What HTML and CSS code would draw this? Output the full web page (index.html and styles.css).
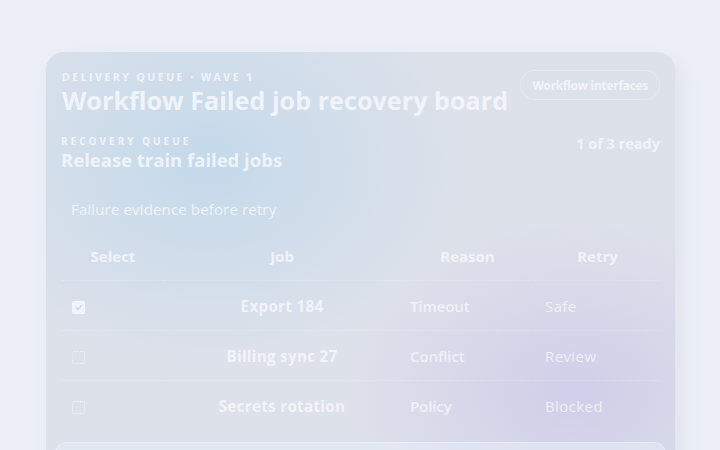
FILE: index.html
```html
<!DOCTYPE html>
<html>
<head>
<meta charset="utf-8">
<link rel="stylesheet" href="styles.css">
</head>
<body>
<main class="card">
  <header class="top">
    <div class="titles">
      <div class="eyebrow">Delivery queue · Wave 1</div>
      <h1 class="title">Workflow Failed job recovery board</h1>
    </div>
    <span class="pill">Workflow interfaces</span>
  </header>
  <section class="queue">
    <div class="queue-head">
      <div>
        <div class="eyebrow small">Recovery queue</div>
        <h2 class="subtitle">Release train failed jobs</h2>
      </div>
      <div class="ready">1 of 3 ready</div>
    </div>
    <p class="caption">Failure evidence before retry</p>
    <table class="jobs">
      <colgroup>
        <col class="c-sel"><col class="c-job"><col class="c-reason"><col class="c-retry">
      </colgroup>
      <thead>
        <tr><th>Select</th><th>Job</th><th>Reason</th><th>Retry</th></tr>
      </thead>
      <tbody>
        <tr>
          <td><span class="box checked"><svg viewBox="0 0 12 12" width="10" height="10"><path d="M2.5 6.2 L5 8.6 L9.6 3.4" fill="none" stroke="#c9d5e4" stroke-width="1.6"/></svg></span></td>
          <td class="job">Export 184</td><td class="reason">Timeout</td><td class="retry">Safe</td>
        </tr>
        <tr>
          <td><span class="box"></span></td>
          <td class="job">Billing sync 27</td><td class="reason">Conflict</td><td class="retry">Review</td>
        </tr>
        <tr>
          <td><span class="box"></span></td>
          <td class="job">Secrets rotation</td><td class="reason">Policy</td><td class="retry">Blocked</td>
        </tr>
      </tbody>
    </table>
  </section>
  <footer class="foot"></footer>
</main>
</body>
</html>
```
FILE: styles.css
```css
html, body { margin: 0; padding: 0; }
body {
  background: #eceff7;
  font-family: "Open Sans", "Noto Sans", sans-serif;
  color: rgba(244, 246, 251, 0.92);
  height: 450px;
  overflow: hidden;
}
.card {
  margin: 52px 45px 0 46px;
  height: 440px;
  border-radius: 18px;
  background:
    radial-gradient(ellipse 260px 200px at 160px 110px, rgba(195, 217, 235, 0.95), rgba(195, 217, 235, 0) 100%),
    radial-gradient(ellipse 230px 170px at 530px 340px, rgba(208, 205, 233, 0.95), rgba(208, 205, 233, 0) 100%),
    #dde1ea;
  box-shadow: 6px 8px 18px rgba(200, 206, 222, 0.35);
  padding: 18px 15px 0 16px;
  box-sizing: border-box;
}
.top {
  display: flex;
  justify-content: space-between;
  align-items: flex-start;
}
.eyebrow {
  font-size: 10.5px;
  font-weight: 700;
  letter-spacing: 2.5px;
  text-transform: uppercase;
  line-height: 14px;
}
.eyebrow.small { font-size: 10px; letter-spacing: 3px; margin-left: -1px; }
.title {
  margin: 0;
  font-size: 25.2px;
  font-weight: 700;
  line-height: 33px;
  letter-spacing: 0;
}
.pill {
  border: 1px dotted rgba(244, 246, 251, 0.8);
  border-radius: 16px;
  padding: 6px 11px;
  font-size: 11.8px;
  font-weight: 700;
  letter-spacing: -0.2px;
  line-height: 16px;
}
.queue { padding-top: 17px; }
.queue-head {
  display: flex;
  justify-content: space-between;
  align-items: flex-start;
}
.subtitle {
  margin: 0 0 0 -1px;
  font-size: 18.5px;
  font-weight: 700;
  line-height: 24px;
  letter-spacing: 0;
}
.ready {
  font-size: 14.5px;
  font-weight: 700;
  margin-top: 0;
  letter-spacing: 0;
}
.caption {
  margin: 28px 0 0 9px;
  font-size: 15px;
  line-height: 18px;
  letter-spacing: 0.15px;
}
.jobs {
  margin-top: 14px;
  border-collapse: collapse;
  width: 598px;
  table-layout: fixed;
}
.c-sel { width: 102px; }
.c-job { width: 236px; }
.c-reason { width: 135px; }
.c-retry { width: 125px; }
.jobs th {
  font-size: 15px;
  font-weight: 700;
  height: 48px;
  text-align: center;
  padding: 0;
  letter-spacing: 0;
}
.jobs td {
  height: 49px;
  padding: 0 10px;
  font-size: 15px;
  letter-spacing: 0;
  border-top: 1px dotted rgba(240, 243, 250, 0.35);
}
.jobs td.job { text-align: center; font-weight: 700; font-size: 15.2px; letter-spacing: 0.3px; }
.jobs td.reason { font-weight: 600; letter-spacing: -0.1px; color: rgba(244, 246, 251, 0.85); }
.jobs td.retry { padding-left: 10px; letter-spacing: 0.4px; color: rgba(244, 246, 251, 0.85); }
.box {
  display: inline-flex;
  align-items: center;
  justify-content: center;
  width: 11px;
  height: 11px;
  border: 1px dotted rgba(244, 246, 251, 0.9);
  border-radius: 2px;
  vertical-align: middle;
}
.box.checked {
  background: rgba(244, 246, 251, 0.85);
  border-style: solid;
}
.foot {
  margin: 12px -6px 0 -7px;
  height: 40px;
  border-radius: 12px;
  border: 1px dotted rgba(244, 246, 251, 0.8);
  background: rgba(230, 236, 246, 0.6);
}
```
